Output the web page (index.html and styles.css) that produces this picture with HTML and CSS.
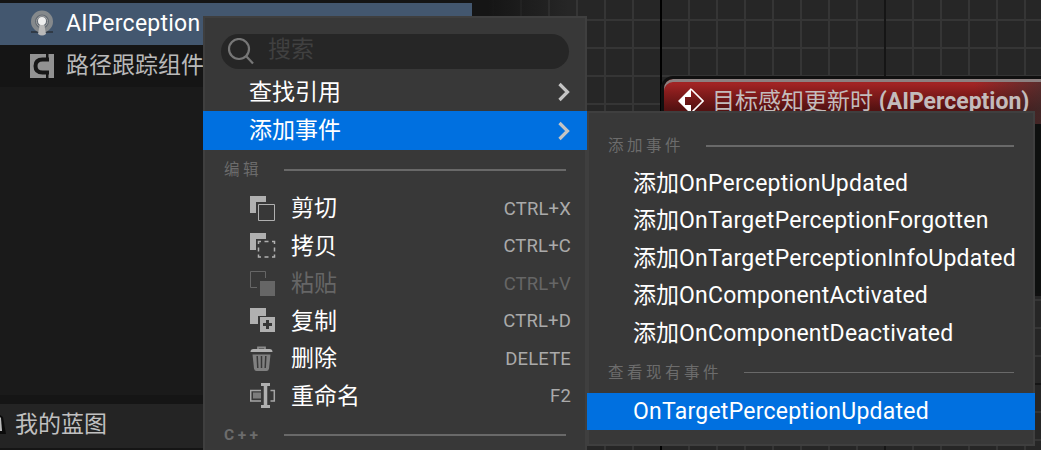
FILE: index.html
```html
<!DOCTYPE html>
<html lang="zh-CN">
<head>
    <meta charset="utf-8">
    <title>AIPerception</title>
    <link rel="stylesheet" href="styles.css">
</head>

<body>
    <main class="editor">
        <div class="sidebar">
            <div class="component selected">
                <svg class="component-icon" width="26" height="28" viewBox="0 0 26 28">
                    <path d="M2 22h22" stroke="#303a46" stroke-width="2"/>
                    <circle cx="13" cy="11.5" r="9" fill="#626a73" stroke="#85898c" stroke-width="4"/>
                    <circle cx="13" cy="11.5" r="5.5" fill="none" stroke="#a2a2a2" stroke-width="1"/>
                    <path d="M11 13h4l2 11q-4 3-8 0z" fill="#b9b9b9"/>
                    <circle cx="13" cy="11" r="4" fill="#eee"/>
                </svg>
                <span class="latin">AIPerception</span>
            </div>
            <div class="component">
                <svg class="component-icon" width="26" height="28" viewBox="0 0 26 28">
                    <path d="M1 2h24v24H1z" fill="#929292"/>
                    <path d="M20 7.500h-6.500q-7 0-7 6.500t7 6.500H20" fill="none" stroke="#161616" stroke-width="4"/>
                    <path d="M17 2h2.500v4H17zM17 22h2.500v4H17z" fill="#161616"/>
                </svg>
                <span>路径跟踪组件</span>
            </div>
            <div class="blueprint">
                <svg class="blueprint-icon" width="6" height="22" viewBox="0 0 6 22">
                    <path d="M0 1l3 2 3 17H0z" fill="#0b0b0b"/>
                    <path d="M0 3l1 1 1 13H0z" fill="#bbb"/>
                </svg>
                <span>我的蓝图</span>
            </div>
        </div>
        <div class="graph">
            <div class="node">
                <svg width="26" height="26" viewBox="0 0 26 26">
                    <path d="M13 0L0 13l13 13V17H7V9h6z" fill="#fff"/>
                    <path d="M13 1l12 12-12 12" fill="none" stroke="#fff" stroke-width="1.600"/>
                </svg>
                <span>目标感知更新时 <b>(AIPerception)</b></span>
            </div>
        </div>
    </main>

    <div class="menu">
        <div class="search">
            <svg width="28" height="28" viewBox="0 0 28 28" fill="none" stroke="#777" stroke-width="2.2">
                <circle cx="12" cy="11" r="10"/>
                <path d="M19 18l7 7.500"/>
            </svg>
            <span>搜索</span>
        </div>
        <div class="parent-item">
            <span>查找引用</span>
            <svg width="14" height="20" viewBox="0 0 14 20"><path d="M2.500 2l8 8-8 8" fill="none" stroke="#c4c4c4" stroke-width="3.200"/></svg>
        </div>
        <div class="parent-item active">
            <span>添加事件</span>
            <svg width="14" height="20" viewBox="0 0 14 20"><path d="M2.500 2l8 8-8 8" fill="none" stroke="#c4c4c4" stroke-width="3.200"/></svg>
        </div>
        <div class="heading edit">编辑</div>
        <div class="item">
            <svg width="26" height="26" viewBox="0 0 26 26">
                <path d="M0 0h16v6H6v11H0z" fill="#b0b0b0"/>
                <path d="M8.500 8.500h16v16h-16z" fill="none" stroke="#b0b0b0"/>
            </svg>
            <span>剪切</span><kbd>CTRL+X</kbd>
        </div>
        <div class="item">
            <svg width="26" height="26" viewBox="0 0 26 26">
                <path d="M0 0h16v6H6v11H0z" fill="#b0b0b0"/>
                <path d="M8.500 11V8.500H11M14.500 8.500h4M22 8.500h2.500V11M24.500 14.500v4M24.500 21.500v2.500H22M18.500 24h-4M11 24H8.500v-2.500M8.500 18.500v-4" fill="none" stroke="#b0b0b0" stroke-width="1.500"/>
            </svg>
            <span>拷贝</span><kbd>CTRL+C</kbd>
        </div>
        <div class="item disabled">
            <svg width="26" height="26" viewBox="0 0 26 26">
                <path d="M7 16.500H.5V.5h15V7" fill="none" stroke="#666"/>
                <path d="M10 10h15v15H10z" fill="#666"/>
            </svg>
            <span>粘贴</span><kbd>CTRL+V</kbd>
        </div>
        <div class="item">
            <svg width="26" height="26" viewBox="0 0 26 26">
                <path d="M0 0h16v8H8v8H0z" fill="#b0b0b0"/>
                <path d="M10 9h15v15H10z" fill="#b0b0b0"/>
                <path d="M17.500 12v9M13 16.500h9" stroke="#383838" stroke-width="3"/>
            </svg>
            <span>复制</span><kbd>CTRL+D</kbd>
        </div>
        <div class="item">
            <svg width="26" height="26" viewBox="0 0 26 26">
                <path d="M8 3V1.500h7V3" fill="none" stroke="#8b8b8b" stroke-width="1.800"/>
                <path d="M.5 6q0-3 3-3h16q3 0 3 3z" fill="#b0b0b0"/>
                <path d="M2.500 8.500h18l-1.500 14q-.5 2.500-2.500 2.500h-10q-2 0-2.500-2.500z" fill="#808080"/>
                <path d="M7.200 10l.6 12M11.500 10v12M15.800 10l-.6 12" stroke="#383838" stroke-width="1.500"/>
            </svg>
            <span>删除</span><kbd>DELETE</kbd>
        </div>
        <div class="item">
            <svg width="26" height="26" viewBox="0 0 26 26">
                <path d="M11 7.500H.700v10.500H11M20.500 7.500h3.800v10.500h-3.800" fill="none" stroke="#a5a5a5" stroke-width="1.500"/>
                <path d="M3 9.500h8v6H3z" fill="#7c7c7c"/>
                <path d="M11 1.500h9M11 23.500h9" stroke="#b0b0b0" stroke-width="3"/>
                <path d="M15.500 2v21" stroke="#b0b0b0" stroke-width="3.500"/>
            </svg>
            <span>重命名</span><kbd>F2</kbd>
        </div>
        <div class="heading cpp">C++</div>
    </div>

    <div class="menu submenu">
        <div class="heading add">添加事件</div>
        <div class="event">添加<span>OnPerceptionUpdated</span></div>
        <div class="event">添加<span>OnTargetPerceptionForgotten</span></div>
        <div class="event">添加<span>OnTargetPerceptionInfoUpdated</span></div>
        <div class="event">添加<span>OnComponentActivated</span></div>
        <div class="event">添加<span>OnComponentDeactivated</span></div>
        <div class="heading view">查看现有事件</div>
        <div class="event active"><span>OnTargetPerceptionUpdated</span></div>
    </div>
</body>
</html>
```
FILE: styles.css
```css
* {
    box-sizing: border-box;
}

body {
    margin: 0;
    height: 450px;
    overflow: hidden;
    position: relative;
    background: #151515;
    color: #fff;
    font-family: Roboto, "Noto Sans CJK SC", sans-serif;
    font-size: 23px;
    line-height: 30px;
    white-space: nowrap;
}

svg {
    display: block;
    flex: none;
}

.editor {
    display: flex;
    height: 450px;
}

.sidebar {
    width: 472px;
    margin-right: 16px;
    padding-top: 3px;
    background: #1a1a1a;
    box-shadow: inset 0 3px #151515;
    display: flex;
    flex-direction: column;
}

.component {
    height: 42px;
    display: flex;
    align-items: center;
    gap: 11px;
    padding-left: 29px;
    background: #151515;
    color: #b9b9b9;
}

.component.selected {
    background: #43576f;
    color: #fff;
}

.latin,
.event span {
    letter-spacing: .240px;
}

.blueprint {
    margin-top: auto;
    height: 55px;
    padding-bottom: 2px;
    border-top: 9px solid #151515;
    border-bottom: 2px solid #151515;
    background: #242424;
    color: #c0c0c0;
    display: flex;
    align-items: center;
    gap: 9px;
}

/* 28px cells, black lines mark the major divisions */
.graph {
    flex: 1;
    padding: 76px 0 0 173px;
    overflow: hidden;
    background:
        linear-gradient(90deg, #151515, transparent 80px),
        linear-gradient(#000, #000) 172px 0 / 2px 100% no-repeat,
        linear-gradient(#151515, #151515) 396px 0 / 2px 100% no-repeat,
        linear-gradient(#151515, #151515) 0 383px / 100% 2px no-repeat,
        linear-gradient(90deg, #353535 2px, transparent 2px) 4px 0 / 28px 28px,
        linear-gradient(#353535 2px, transparent 2px) 0 19px / 28px 28px,
        #262626;
}

.node {
    width: 420px;
    height: 220px;
    padding: 8px 0 0 14px;
    display: flex;
    align-items: flex-start;
    gap: 8px;
    border: 3px solid #101010;
    border-radius: 12px 0 0 0;
    box-shadow: inset 0 3px #8d8080;
    background:
        linear-gradient(90deg, transparent 310px, rgba(56, 48, 48, .750) 385px) 0 0 / 100% 45px no-repeat,
        linear-gradient(#a12424 5px, #851c1c 14px, #551212 30px) 0 0 / 100% 45px no-repeat,
        #0e100f;
    color: #c3bcbc;
}

.node svg {
    margin-top: 1px;
}

.menu {
    position: absolute;
    left: 203px;
    top: 16px;
    width: 384px;
    height: 440px;
    padding-top: 18px;
    background: #383838;
    box-shadow: inset 0 0 0 2px #3f3f3f;
}

.search {
    height: 35px;
    margin: 0 18px 4px;
    padding-left: 6px;
    border-radius: 18px;
    background: #262626;
    color: #404040;
    display: flex;
    align-items: center;
    gap: 13px;
}

.search span {
    margin-top: -3px;
}

.parent-item {
    height: 38px;
    padding: 0 16px 0 46px;
    display: flex;
    align-items: center;
    justify-content: space-between;
}

.parent-item span {
    padding-top: 1px;
}

.parent-item.active {
    height: 39px;
}

.active {
    background: #0070e0;
}

.heading {
    height: 39.750px;
    padding: 0 21px;
    display: flex;
    align-items: center;
    color: #6c6c6c;
    font-size: 15.500px;
    letter-spacing: 3.500px;
}

.heading::after {
    content: "";
    flex: 1;
    height: 2px;
    margin-left: 22px;
    background: #696969;
}

.item {
    height: 37.500px;
    padding: 0 16px 0 47px;
    display: flex;
    align-items: center;
}

.item span {
    margin-left: 15px;
    padding-top: 1px;
}

.item kbd {
    margin-left: auto;
    color: #aaa;
    font-family: Roboto, sans-serif;
    font-size: 18.500px;
    letter-spacing: .150px;
}

.item.disabled,
.item.disabled kbd {
    color: #666;
}

.cpp {
    font-weight: bold;
}

.submenu {
    left: 587px;
    top: 111px;
    width: 448px;
    height: 335px;
    padding-top: 15px;
}

.event {
    height: 37.500px;
    padding-left: 46px;
    display: flex;
    align-items: center;
}

.event.active {
    height: 37px;
}

.heading.add {
    height: 39px;
}

.heading.view {
    height: 40.500px;
}

.heading.view::after {
    height: 1px;
}
```
